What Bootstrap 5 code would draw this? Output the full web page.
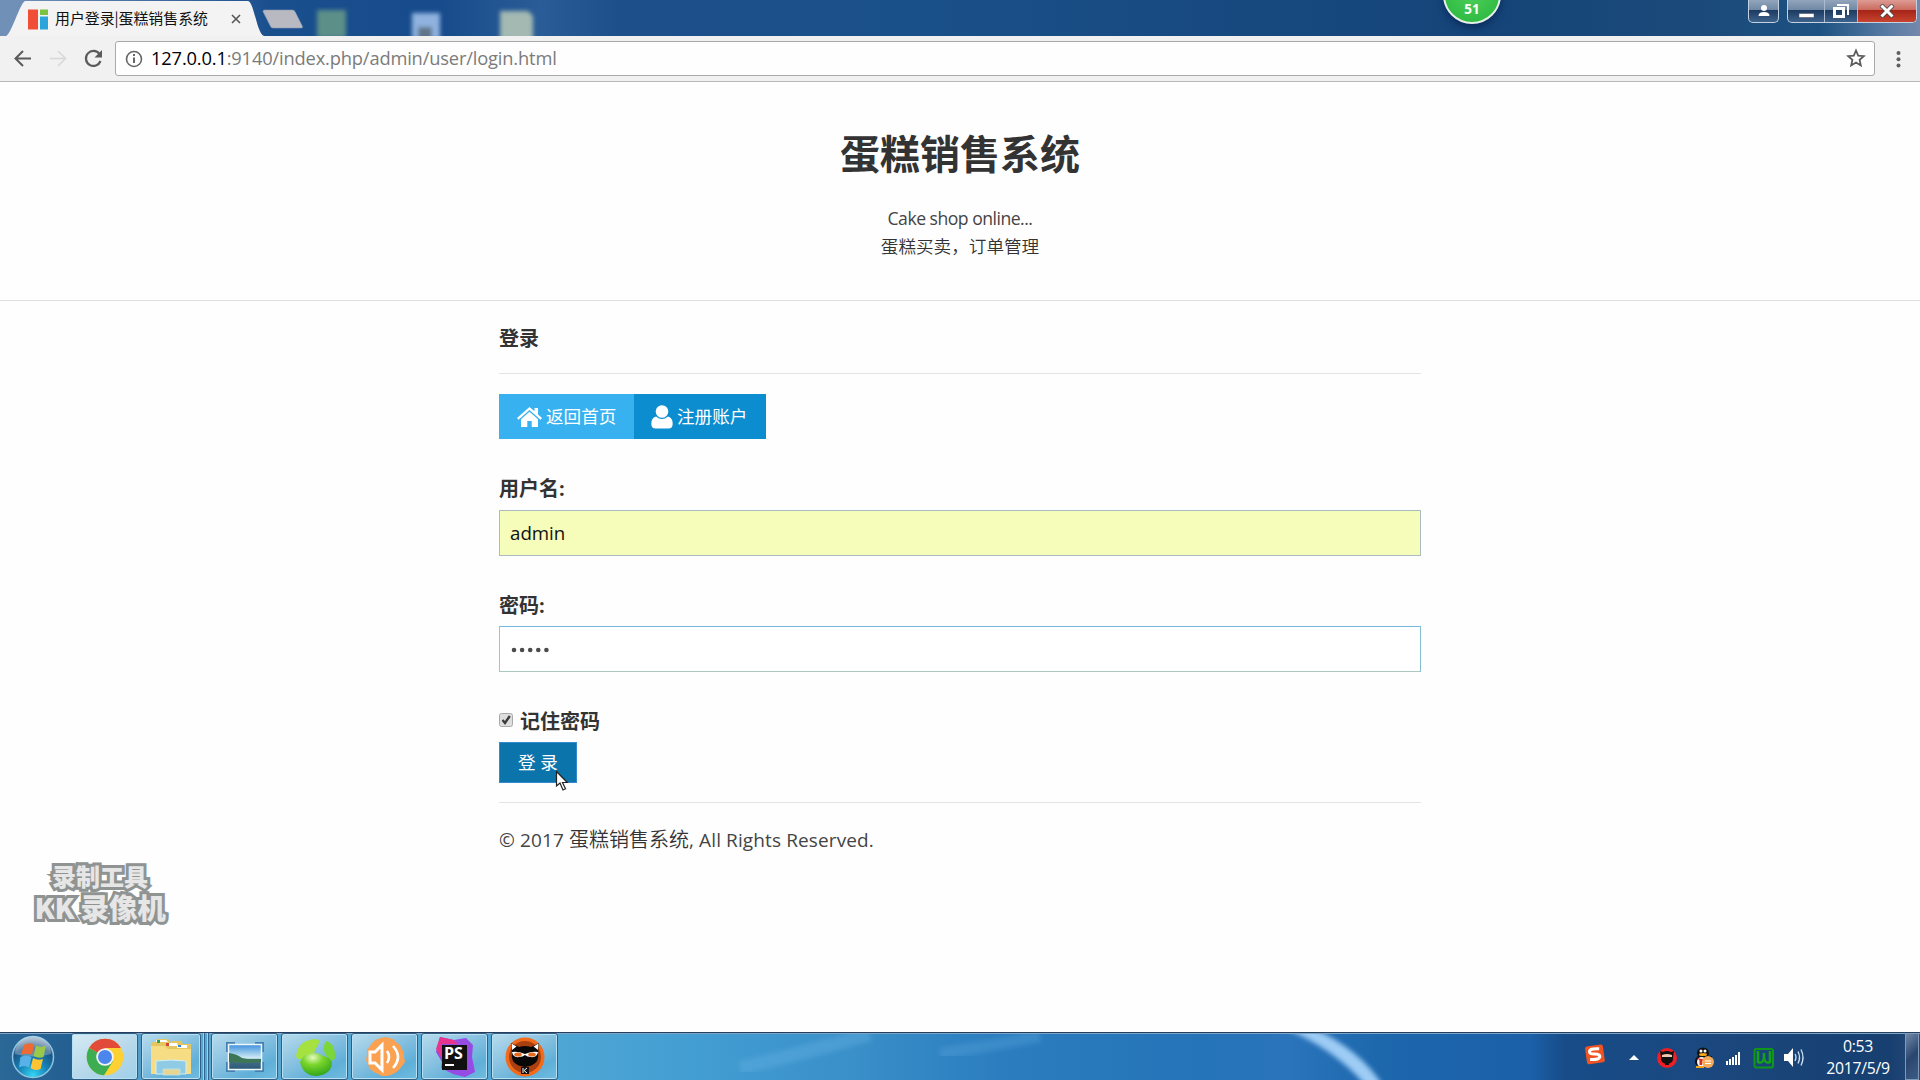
<!DOCTYPE html>
<html lang="zh-CN">
<head>
<meta charset="utf-8">
<title>用户登录|蛋糕销售系统</title>
<link href="https://cdn.jsdelivr.net/npm/bootstrap@5.3.0/dist/css/bootstrap.min.css" rel="stylesheet">
<style>
body{font-family:"Open Sans","Noto Sans CJK SC",sans-serif;color:#333;background:#fefefe;width:1920px;height:1080px}
.desk{width:1920px;height:1080px}
svg{display:block;flex:none}
/* title bar */
.titlebar{height:36px;background:linear-gradient(90deg,#7190b8 0,#7190b8 16px,#1a4f8e 270px,#174b8b 440px,#2a5c97 540px,#1d4f8b 620px,#1a5089 900px,#154478 1500px,#1b4a7a 1700px,#1d5282 1820px,#5a7ca5 1890px,#7488ab)}
.tabshape{position:absolute;left:0;top:0}
.tabtitle{font-family:"Noto Sans CJK SC",sans-serif;font-size:14.9px;color:#111;line-height:36px;padding-left:55px;width:227px}
.ball{position:absolute;left:1443px;top:-34px;width:58px;height:58px;border-radius:50%;border:2px solid #e8efe8;background:radial-gradient(circle at 50% 45%,#4fd05c,#25b53a);color:#fff;font-weight:700;font-size:13.5px;line-height:18px;padding-bottom:4px;box-shadow:0 4px 7px #0b2d5f}
.winbtns{padding-right:3px}
.glass{height:23px;border:1px solid #c3d2e2;border-top:0;border-radius:0 0 5px 5px;background:linear-gradient(#92a5bb 0,#7088a5 45%,#1d3a60 46%,#3e628c 100%);overflow:hidden}
.glass>span{display:flex;justify-content:center;align-items:center;height:100%}
.glass .sep{border-left:1px solid #a9bbd0}
.glass .closebtn{background:linear-gradient(#dc9c94 0,#cc6a5e 45%,#a52317 46%,#c8442f 100%)}
/* toolbar */
.tools{height:46px;background:#f1f1f1;border-bottom:1px solid #b9b9b9;padding:5px 0 6px 0}
.omni{width:1760px;height:35px;border:1px solid #a9a9a9;border-radius:3px;background:#fefefe}
.url{font-size:18.3px;letter-spacing:-.16px;line-height:32px;color:#7b7b7b;margin-left:-1px}
.url b{font-weight:400;color:#000}
/* page */
.masthead{height:219px;border-bottom:1px solid #dedede;padding-top:41px}
.masthead h1{font-size:40px;font-weight:700;line-height:58px;margin:0 0 24px;font-family:"Noto Sans CJK SC",sans-serif}
.sub{font-size:17.6px;line-height:27.5px;font-weight:350}
.sub .en{font-size:17.6px;letter-spacing:-.5px;font-weight:400;color:#444}
.formcol{width:922px;margin:0 auto}
.heading{font-size:20px;font-weight:700;line-height:30px;margin:23px 0 19px}
.rule{border-top:1px solid #e4e4e4;height:1px}
.am{border-radius:0;border:0;color:#fff;font-size:17.6px;line-height:25px;padding:0}
.am:hover{color:#fff}
.home{background:#37b1ef;width:135px;height:45px;padding-left:18px}
.reg{background:#0b8dd0;width:132px;height:45px;padding-left:17px}
.lab{font-size:20px;font-weight:700;line-height:30px;display:block}
.inp{border:1px solid #b5bcbd;border-radius:0;height:46px;font-size:20px;padding:0 10px;line-height:44px;color:#111}
.inp.auto{background:#f6fcb9;border-color:#a9bcc0}
.inp.pw{border-top-color:#74b8e0;border-right-color:#86bfd0;border-bottom-color:#a9c9c0}
.latin{font-size:18.7px;letter-spacing:0}
.go{background:#0a74ab;width:78px;height:41px;border:1px solid #3589cf}
.foot{font-size:20px;line-height:30px;padding-top:22px;font-weight:350}
.foot .latin{font-size:19px;letter-spacing:.12px;font-weight:400;color:#444}
.cursor{position:absolute;left:555px;top:770px}
.wm{position:absolute;left:32px;top:860px;width:136px;font-family:"Noto Sans CJK SC",sans-serif;font-weight:900;color:#e6e6e6;-webkit-text-stroke:6px #8f9493;paint-order:stroke fill;text-align:center}
.wm div{line-height:32px;font-size:24px;white-space:nowrap}
.wm div+div{font-size:28.6px;line-height:29px;letter-spacing:-.3px}
/* taskbar */
.taskbar{height:48px;border-top:1px solid #263f5e;box-shadow:inset 0 1px 0 #7da5c6;position:relative;background:linear-gradient(90deg,#2a6898 0,#245f91 70px,#59a7d0 150px,#4ea6d4 560px,#429dd2 700px,#3a90c9 850px,#2b7dbf 1000px,#2573b8 1200px,#2a74bb 1290px,#1d67ad 1380px,#1b60a9 1530px,#174c88 1565px,#1b487f 1700px,#173f70 1890px,#284c78)}
.arc{position:absolute;left:560px;top:1px}
.start{width:71px}
.tb{width:67px;height:47px;border:1px solid #315f83;box-shadow:inset 0 0 0 1px #b9dff2;border-radius:3px;background:linear-gradient(150deg,#b7dced 0,#8cc3e1 40%,#5fafd8 75%,#71bde0);margin-right:3px;display:flex;justify-content:center;align-items:center}
.tb.act{background:linear-gradient(150deg,#d6ebf4,#b3d6e9 60%,#9fd0ea)}
.tb.folder{width:60px;margin-right:0}
.stk{width:4px;height:47px;border-right:1px solid #2f668d;box-shadow:inset -1px 0 0 #9fd0ea}
.clock{width:104px;font-size:15.8px;line-height:22px;color:#fff;letter-spacing:-.3px;margin-right:-5px;padding-top:1px}
.peek{width:14px;height:47px;border:1px solid #7e99ba;background:linear-gradient(135deg,#7188a8,#2a466e 50%,#3d5d86)}
</style>
</head>
<body>
<div class="desk d-flex flex-column position-relative overflow-hidden">
<header class="titlebar d-flex position-relative">
 <svg class="tabshape" width="640" height="36" viewBox="0 0 640 36">
  <defs><filter id="bl"><feGaussianBlur stdDeviation="2"/></filter></defs>
  <g filter="url(#bl)"><rect x="317" y="10" width="29" height="28" fill="#5b8f88"/><rect x="412" y="13" width="28" height="26" fill="#8fb2df"/><rect x="418" y="27" width="14" height="12" fill="#5f7489"/><path d="M500 11h28l5 5v24h-33z" fill="#a3b9b2"/></g>
  <path d="M6 36C11 35 20 3 25 1H248C254 2 257 34 264 36Z" fill="#f3f3f3"/>
  <path d="M264.500 10H292.500Q294.500 10.200 295.200 12L302.500 26.500Q302.800 28 301 28H273Q271.300 28 270.600 26.500L263 11.500Q262.800 10 264.500 10Z" fill="#b8b9c1" stroke="#8a9cb5" stroke-width=".6"/>
  <path d="M28 9.500h10v20H28z" fill="#f04e36"/><path d="M40 9.500h8V15h-8z" fill="#7cc142"/><path d="M40 16.500h8v13h-8z" fill="#2ba4dc"/>
 </svg>
 <div class="tabtitle position-relative text-nowrap">用户登录|蛋糕销售系统</div>
 <svg class="position-relative" width="18" height="36" viewBox="0 0 18 36"><path d="M5 15l8 8M13 15l-8 8" stroke="#555" stroke-width="1.600"/></svg>
 <div class="ball d-flex align-items-end justify-content-center">51</div>
 <div class="winbtns d-flex ms-auto">
  <div class="glass" style="width:31px"><span><svg width="14" height="14" viewBox="0 0 14 14" fill="#fff"><circle cx="7" cy="4" r="3"/><path d="M1.500 12q0-4 5.500-4t5.500 4z"/></svg></span></div>
  <div class="glass d-flex" style="width:130px;margin-left:8px">
   <span style="width:36px"><svg width="17" height="14" viewBox="0 0 17 14"><path d="M1 9.500h15v4H1z" fill="#fff" stroke="#445" stroke-width=".5"/></svg></span>
   <span class="sep" style="width:33px"><svg width="18" height="17" viewBox="0 0 18 17" fill="none" stroke="#fff"><path d="M5 2h11v10" stroke-width="2"/><path d="M2.500 5.500h9v8h-9z" stroke-width="3"/></svg></span>
   <span class="sep closebtn flex-fill"><svg width="16" height="14" viewBox="0 0 16 14"><path d="M2 1l12 12M14 1L2 13" stroke="#444" stroke-width="4.500"/><path d="M2.500 1.500l11 11M13.500 1.500l-11 11" stroke="#fff" stroke-width="3"/></svg></span>
  </div>
 </div>
</header>
<nav class="tools d-flex align-items-center">
 <svg width="115" height="35" viewBox="0 0 115 35" fill="none" stroke="#5b5b5b" stroke-width="2"><path d="M31 17.500H16M23 10l-7.500 7.500L23 25"/><path d="M50 17.500H65M58 10l7.500 7.500L58 25" stroke="#d8d8d8" stroke-width="1.600"/><path d="M99.500 13A7.500 7.500 0 1 0 100.500 20" stroke-width="2.200"/><path d="M102 9v7.500h-7.500z" fill="#5b5b5b" stroke="none"/></svg>
 <div class="omni d-flex align-items-center">
  <svg width="36" height="33" viewBox="0 0 36 33"><circle cx="18" cy="17" r="7.500" fill="none" stroke="#666" stroke-width="1.600"/><path d="M17 15.500h2V21h-2zM17 12h2v2h-2z" fill="#666"/></svg>
  <div class="url"><b>127.0.0.1</b>:9140/index.php/admin/user/login.html</div>
  <svg class="ms-auto me-2" width="20" height="20" viewBox="0 0 20 20"><path d="M10 2.500l2.200 5.200 5.600.5-4.200 3.700 1.200 5.500L10 14.500l-4.800 2.900 1.200-5.500L2.200 8.200l5.600-.5z" fill="none" stroke="#5b5b5b" stroke-width="1.800"/></svg>
 </div>
 <svg width="45" height="35" viewBox="0 0 45 35" fill="#5f5f5f"><circle cx="23.500" cy="12" r="2"/><circle cx="23.500" cy="18.200" r="2"/><circle cx="23.500" cy="24.500" r="2"/></svg>
</nav>
<main class="flex-fill">
 <div class="masthead text-center">
  <h1>蛋糕销售系统</h1>
  <div class="sub"><span class="en">Cake shop online...</span><br>蛋糕买卖，订单管理</div>
 </div>
 <div class="formcol">
  <h3 class="heading">登录</h3>
  <div class="rule"></div>
  <div class="d-flex" style="margin-top:20px">
   <a class="btn am home d-flex align-items-center"><svg width="25" height="24" viewBox="0 0 25 24" fill="#fff"><path d="M12.500 2L0 13l1.500 1.800L12.500 5l11 9.800L25 13l-4-3.600V3h-3.500v3.300z"/><path d="M12.500 6.800L4 14.300V22h6.300v-6h4.400v6H21v-7.700z"/></svg><span style="margin-left:4px">返回首页</span></a>
   <a class="btn am reg d-flex align-items-center"><svg width="22" height="26" viewBox="0 0 22 26" fill="#fff"><circle cx="11" cy="7.500" r="6.300"/><path d="M5 12.500Q0 14 .3 20q.2 4.500 4.200 4.500h13q4 0 4.200-4.500.3-6-4.700-7.500Q11 17.500 5 12.500z"/></svg><span style="margin-left:4px">注册账户</span></a>
  </div>
  <form>
   <label class="lab" style="margin-top:35px;margin-bottom:6px">用户名:</label>
   <div class="form-control inp auto"><span class="latin">admin</span></div>
   <label class="lab" style="margin-top:35px;margin-bottom:5px">密码:</label>
   <div class="form-control inp pw d-flex align-items-center"><svg width="42" height="8" viewBox="0 0 42 8" fill="#4b4b4b"><circle cx="4" cy="5" r="2.300"/><circle cx="12.100" cy="5" r="2.300"/><circle cx="20.200" cy="5" r="2.300"/><circle cx="28.300" cy="5" r="2.300"/><circle cx="36.400" cy="5" r="2.300"/></svg></div>
   <div class="d-flex align-items-center" style="margin-top:35px"><svg width="14" height="22" viewBox="0 0 14 22"><rect x=".5" y="2.500" width="13" height="13" rx="2" fill="#dedede" stroke="#a9a9a9"/><path d="M3.500 9l2.500 3L10.800 5" fill="none" stroke="#3b3b3b" stroke-width="2.400"/></svg><span class="lab" style="margin-left:7px">记住密码</span></div>
   <button type="button" class="btn am go d-block" style="margin-top:5px">登 录</button>
  </form>
  <div class="rule" style="margin-top:19px"></div>
  <div class="foot"><span class="latin">© 2017 </span>蛋糕销售系统<span class="latin">, All Rights Reserved.</span></div>
 </div>
</main>
<footer class="taskbar d-flex">
 <svg class="arc" width="1010" height="46" viewBox="0 0 1010 46"><defs><filter id="b2"><feGaussianBlur stdDeviation="2.500"/></filter></defs><path d="M180 34Q240 20 310 0" stroke="#64b0e2" stroke-width="14" fill="none" opacity=".4" filter="url(#b2)"/><path d="M380 20Q430 12 480 2" stroke="#5aa5dd" stroke-width="12" fill="none" opacity=".35" filter="url(#b2)"/><path d="M724-6Q775 15 806 52L823 52Q800 15 752-6Z" fill="#9dccf5" filter="url(#b2)"/></svg>
 <div class="start d-flex align-items-center"><svg style="margin-left:11px" width="44" height="44" viewBox="0 0 44 44"><defs><radialGradient id="orb" cx=".5" cy=".95" r=".9"><stop offset="0" stop-color="#35d6f5"/><stop offset=".4" stop-color="#1683b8"/><stop offset=".75" stop-color="#1b5485"/><stop offset="1" stop-color="#8fa9c0"/></radialGradient></defs><circle cx="22" cy="22" r="20.500" fill="url(#orb)" stroke="#8fc4de" stroke-width="1.500"/><path d="M4 19A18 18 0 0 1 40 19Q22 24 4 19z" fill="#fff" opacity=".28"/><path d="M13 10q5-3 10-.5L21 20q-5-2.500-11 0z" fill="#ee6a35"/><path d="M25 10.500q5 2.500 10 0L32.500 22q-5 2-10-1z" fill="#9ac94a"/><path d="M9.500 22q5.500-2.500 11 0L18 32.500q-5-3-10 0z" fill="#58b2e8"/><path d="M22 23q5 3 10 1l-2.500 10q-5 2.500-10-1z" fill="#ffc431"/></svg></div>
 <div class="tb act"><svg width="38" height="38" viewBox="0 0 38 38"><circle cx="19" cy="19" r="18.300" fill="#fdd033"/><path d="M19 19L3.200 9.800A18.300 18.300 0 0 0 18 37.300l9-14z" fill="#3cae51"/><path d="M19 19L3.200 9.800A18.300 18.300 0 0 1 34.900 10H19z" fill="#e24a3a"/><circle cx="19" cy="19" r="8.800" fill="#f4f4f4"/><circle cx="19" cy="19" r="7" fill="#4a86ec"/></svg></div>
 <div class="tb folder"><svg width="42" height="38" viewBox="0 0 42 38"><path d="M2 4h3l2-3h11l2 3 3-1h8l2 3h8v30H2z" fill="#e5c560"/><path d="M6 2h10l2 2H6zM16 5h11l1 3H16zM27 7h10v3H27z" fill="#fff"/><path d="M7 2h3v3H7z" fill="#29a354"/><path d="M16 5h3v3h-3z" fill="#d64731"/><path d="M28 7h3v2h-3z" fill="#3b8ad4"/><path d="M1 8h14l3 3h23v25H1z" fill="#f6dc83"/><path d="M6 23q15-2 30 0v13H6z" fill="#8fcbe4" stroke="#d6eff6"/><path d="M13 31h17v6H13z" fill="#e6d692" stroke="#b9dfe8"/></svg></div>
 <div class="stk"></div><div class="stk" style="margin-right:2px"></div>
 <div class="tb"><svg width="40" height="32" viewBox="0 0 40 32"><defs><linearGradient id="sky" x2="0" y2="1"><stop offset="0" stop-color="#3d8fdc"/><stop offset=".55" stop-color="#d3edf5"/><stop offset=".6" stop-color="#46738a"/><stop offset="1" stop-color="#2c5678"/></linearGradient></defs><path d="M1 1h9v5H6v5H1zM39 1h-9v5h4v5h5zM1 31h9v-5H6v-5H1zM39 31h-9v-5h4v-5h5z" fill="#4580b0"/><rect x="3.500" y="3.500" width="33" height="25" fill="url(#sky)" stroke="#eef7fa" stroke-width="1.500"/><path d="M4 12q8 1 13 5 7 2 19 1v3q-16 2-32 0z" fill="#3d7656"/></svg></div>
 <div class="tb"><svg width="42" height="42" viewBox="0 0 42 42"><defs><radialGradient id="gr" cx=".4" cy=".2" r=".9"><stop offset="0" stop-color="#e4fac0"/><stop offset=".35" stop-color="#7bd52b"/><stop offset="1" stop-color="#249c18"/></radialGradient></defs><path d="M2 20Q4 4 22 3q5 0 2 6-3 4-4 8-7 1-12 6-5 1-6-3z" fill="#a5e13f"/><path d="M33 5q9 4 8 17-1 4-5 1-8-6-6-13 1-5 3-5z" fill="#7bd63a"/><path d="M6 26q3-9 14-9 6 0 9 3 7 1 9 6 0 12-15 14Q9 40 6 26z" fill="url(#gr)"/></svg></div>
 <div class="tb"><svg width="42" height="42" viewBox="0 0 42 42"><path d="M17 2l4-1 4 1 4 1 3 3 4 3 2 4 2 4 0 4 1 5-3 4-3 4-4 3-4 2-4 1-5 0-4-2-4-2-4-3-2-4-2-5 1-5 0-5 3-4 3-4 4-3z" fill="#faa152"/><path d="M6 16h5l7-7v25l-7-7H6z" fill="none" stroke="#fff" stroke-width="3"/><path d="M23 15q4 6 0 12M29 10q10 11 0 22" stroke="#fff" stroke-width="2.600" fill="none"/></svg></div>
 <div class="tb"><svg width="42" height="42" viewBox="0 0 42 42"><path d="M2 16L6 1l14 3 12-2 7 7-1 12 3 15-10 5-12-3-12-6 1-6z" fill="#954be4"/><path d="M2 13L6 1l14 3 4 4H8v15z" fill="#e7358e"/><rect x="8" y="9" width="25" height="25" fill="#111"/><text x="10" y="22.500" font-family="Open Sans,sans-serif" font-weight="700" font-size="16" fill="#fff">PS</text><path d="M11 28h9v2h-9z" fill="#fff"/></svg></div>
 <div class="tb"><svg width="42" height="42" viewBox="0 0 42 42"><circle cx="21" cy="21" r="19.500" fill="#f26a1b"/><circle cx="21" cy="21" r="16" fill="#aa400f"/><path d="M8 17L7 7l8 4q6-2 12 0l8-4-1 10q2 12-13 14Q6 29 8 17z" fill="#080808"/><path d="M8 14L7.500 7.500l5 3zM34 14l.5-6.500-5 3z" fill="#fff"/><path d="M8 16q6-1 13 2 7-3 13-2-1 6-7 5-4 0-6-2-2 2-6 2-6 1-7-5z" fill="#fff"/><ellipse cx="14" cy="18.500" rx="3.800" ry="2" fill="#e66b21"/><ellipse cx="28" cy="18.500" rx="3.800" ry="2" fill="#e66b21"/><rect x="17" y="31" width="8" height="7" fill="#111"/><path d="M19 32v5M23 32l-3 2.500 3 2.500" stroke="#fff" fill="none"/></svg></div>
 <div class="d-flex ms-auto align-items-center">
  <svg width="226" height="46" viewBox="0 0 226 46">
   <g transform="rotate(-8 14 21)"><rect x="6" y="11.500" width="18" height="18" rx="2" fill="#ef5321"/><path d="M20 15.500Q10 13.500 10 17.500q0 2 4.800 2.600 4.800.6 4.800 3Q19 27 9.500 24.800" fill="none" stroke="#fff" stroke-width="3"/></g>
   <path d="M49 26l5-5 5 5z" fill="#fff"/>
   <circle cx="87" cy="24" r="10" fill="#ed1f24"/><path d="M80 17l3 1q4-2 8 0l3-1-1 6q1 6-6 7-7-1-6-7z" fill="#111"/><path d="M82 21q5-2 10 0v2H82z" fill="#f2c7b0"/><path d="M85 28h4v3h-4z" fill="#111"/>
   <path d="M115 29q-1-4 4-8l13 1v9q-8 4-16 0z" fill="#111"/><ellipse cx="123" cy="19" rx="6" ry="5.500" fill="#111"/><ellipse cx="121.500" cy="28" rx="4.500" ry="5" fill="#f5f5f5"/><circle cx="121" cy="17" r="1.500" fill="#fff"/><circle cx="125" cy="17" r="1.500" fill="#fff"/><ellipse cx="123" cy="20.500" rx="4" ry="1.500" fill="#f9a51b"/><path d="M117 23.500q6 3 12 0l-1 2-6 1.500v4h-2.500v-4.500z" fill="#db2a25"/><circle cx="128" cy="28" r="6" fill="#f6a957"/><path d="M125 27h6M125 29.500h6" stroke="#fff"/><path d="M116 33h8" stroke="#f3a21b" stroke-width="2"/>
   <path d="M146 27h2v4h-2zM149 25h2v6h-2zM152 23h2v8h-2zM155 21h2v10h-2zM158 18h2v13h-2z" fill="#fff"/>
   <rect x="174.500" y="15" width="18.500" height="18.500" rx="2" fill="none" stroke="#109619" stroke-width="2"/><path d="M178 17v11q5 2 6-4v-5 5q1 6 6 4V17" fill="none" stroke="#14a01b" stroke-width="2.600"/>
   <path d="M204 20h4l5-6v19l-5-6h-4z" fill="#fff"/><path d="M215 20q2 3 0 7M218 17.500q3 6 0 12M221 15.500q4 8 0 16" stroke="#cfe0ef" stroke-width="1.300" fill="none"/>
  </svg>
  <div class="clock text-center">0:53<br>2017/5/9</div>
  <div class="peek" style="margin-right:1px"></div>
 </div>
</footer>
<div class="wm"><div>录制工具</div><div>KK 录像机</div></div>
<svg class="cursor" width="16" height="22" viewBox="0 0 16 22"><path d="M1.500 1.500V16l3.500-3 3 7 2.500-1.200L7.500 12.500h4.800z" fill="#fff" stroke="#222" stroke-width="1.200"/></svg>
</div>
<script src="https://cdn.jsdelivr.net/npm/bootstrap@5.3.0/dist/js/bootstrap.bundle.min.js"></script>
</body>
</html>
